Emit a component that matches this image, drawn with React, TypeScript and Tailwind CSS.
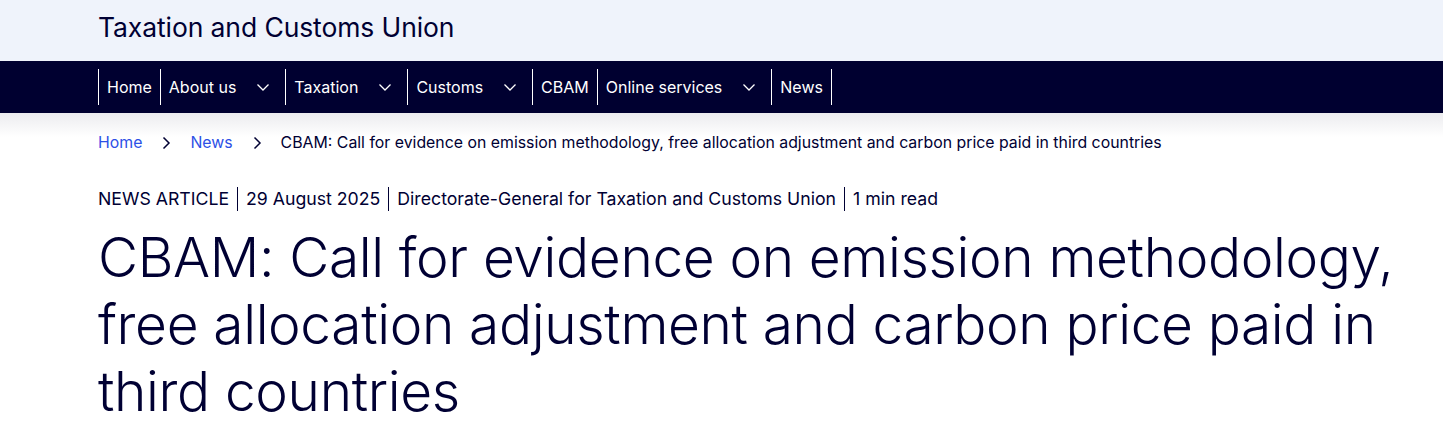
const navItems = [
  { label: 'Home', menu: false },
  { label: 'About us', menu: true },
  { label: 'Taxation', menu: true },
  { label: 'Customs', menu: true },
  { label: 'CBAM', menu: false },
  { label: 'Online services', menu: true },
  { label: 'News', menu: false },
];

function Chevron({ className }: { className?: string }) {
  return (
    <svg viewBox="0 0 16 16" className={className} fill="none" stroke="currentColor" strokeWidth={1.3}>
      <path d="M2.5 5.5 8 11l5.5-5.5" />
    </svg>
  );
}

function ChevronRight() {
  return (
    <svg viewBox="0 0 16 16" className="w-4 h-4" fill="none" stroke="currentColor" strokeWidth={1.5}>
      <path d="M5.5 2.5 11 8l-5.5 5.5" />
    </svg>
  );
}

export default function App() {
  return (
    <div className="min-h-screen bg-white text-[#000033]" style={{ fontFamily: 'Inter, "Noto Sans", sans-serif' }}>
      {/* Site header */}
      <div className="bg-[#eff3fb]">
        <div className="pl-[98px] pr-6 h-[61px] flex items-center">
          <div className="text-[26.5px] leading-none pb-[7px] tracking-[-0.1px]">Taxation and Customs Union</div>
        </div>
      </div>

      {/* Main navigation */}
      <nav className="bg-[#000030] text-white">
        <div className="pl-[98px] pr-6 h-[52px] flex items-center">
          <div className="flex border-r border-white">
            {navItems.map((item) => (
              <div key={item.label} className="flex items-center h-[36px] border-l border-white px-2 text-[16px]">
                <span>{item.label}</span>
                {item.menu && <Chevron className="w-4 h-4 ml-[19px] mr-[6px]" />}
              </div>
            ))}
          </div>
        </div>
      </nav>

      <div className="h-[24px] bg-gradient-to-b from-[#ececef] to-white" />

      <div className="pl-[98px] pr-6 -mt-[6px]">
        {/* Breadcrumb */}
        <div className="flex items-center text-[15.85px] leading-[24px]">
          <span className="text-[#2d50e6]">Home</span>
          <span className="mx-[16px]"><ChevronRight /></span>
          <span className="text-[#2d50e6]">News</span>
          <span className="mx-[16px]"><ChevronRight /></span>
          <span>CBAM: Call for evidence on emission methodology, free allocation adjustment and carbon price paid in third countries</span>
        </div>

        {/* Meta */}
        <div className="mt-[32px] flex items-center text-[17.7px] leading-[24px]">
          <span className="pr-2">NEWS ARTICLE</span>
          <span className="px-2 border-l border-[#000033]">29 August 2025</span>
          <span className="px-2 border-l border-[#000033]">Directorate-General for Taxation and Customs Union</span>
          <span className="px-2 border-l border-[#000033]">1 min read</span>
        </div>

        {/* Title */}
        <h1 className="mt-[13px] text-[55px] leading-[67px] font-light tracking-[-0.35px]">
          CBAM: Call for evidence on emission methodology, free allocation adjustment and carbon price paid in third countries
        </h1>
      </div>
    </div>
  );
}
